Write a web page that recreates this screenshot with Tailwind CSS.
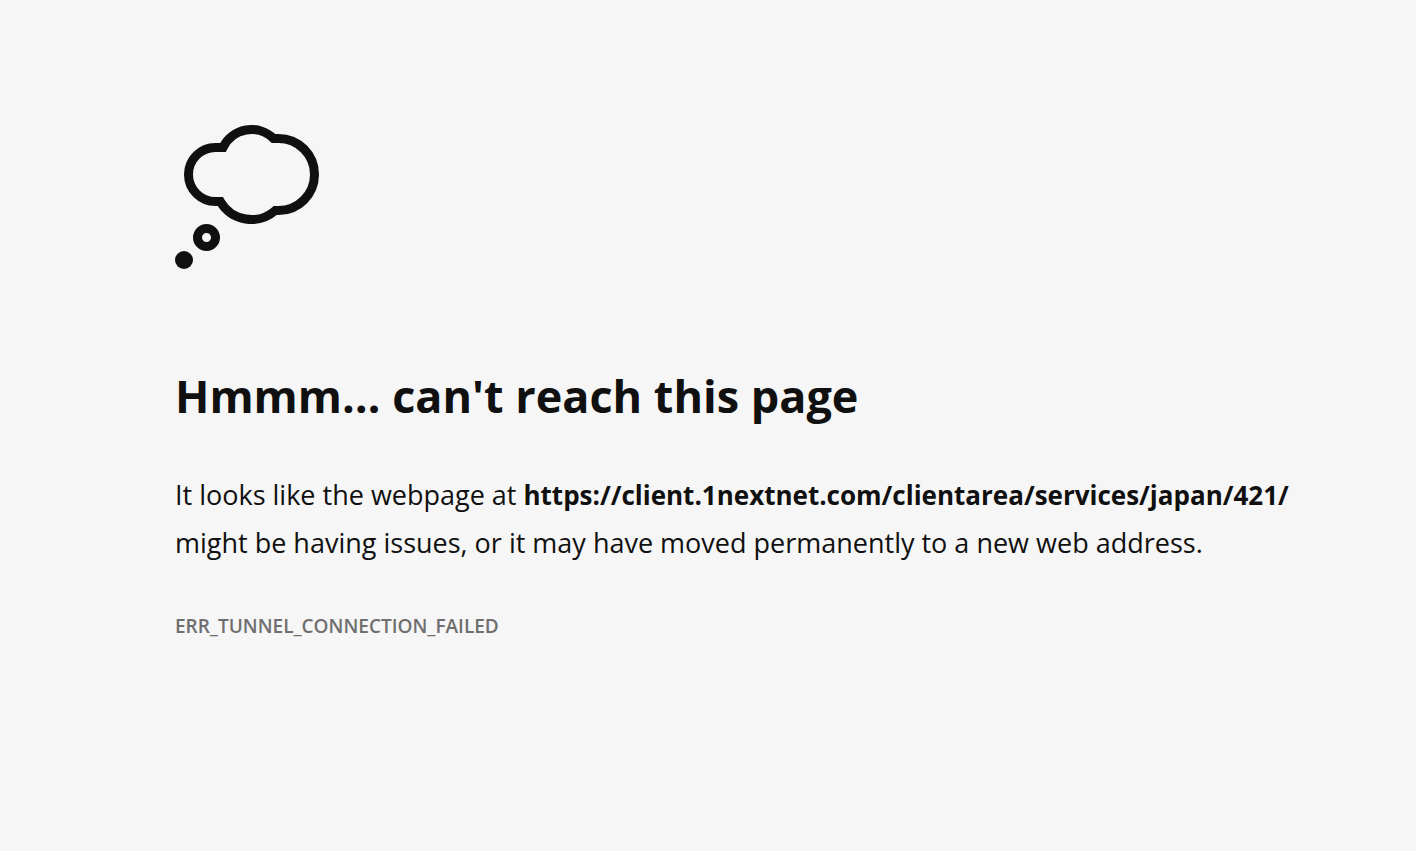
<!DOCTYPE html>
<html lang="en">
<head>
  <meta charset="UTF-8" />
  <meta name="viewport" content="width=device-width, initial-scale=1.0"/>
  <title>Can't reach this page</title>

  <!-- Tailwind CSS -->
  <script src="https://cdn.jsdelivr.net/npm/@tailwindcss/browser@4"></script>
</head>
<body class="min-h-screen bg-[#f6f6f6] font-['Segoe_UI','Open_Sans',sans-serif] text-[#101010]">
  <main class="pt-[125px] pr-20 pb-16 pl-[175px]">
    <!-- Thought bubble -->
    <svg class="size-36" viewBox="0 0 144 144" fill="none" aria-hidden="true">
      <path d="M48 22.500H40.500a27 27 0 0 0 0 54H45.300A36 36 0 0 0 100.300 85.500H103.500a36 36 0 0 0 0-72H98.500A31.500 31.500 0 0 0 48 22.500z" stroke="#101010" stroke-width="9"/>
      <circle cx="31.500" cy="112.500" r="9" stroke="#101010" stroke-width="9"/>
      <circle cx="9" cy="135" r="9" fill="#101010"/>
    </svg>

    <h1 class="mt-24 text-[45px] leading-[62px] font-bold">Hmmm… can't reach this page</h1>

    <p class="mt-11 text-[27px] leading-12">
      It looks like the webpage at
      <strong class="text-[26px] font-bold">https://client.1nextnet.com/clientarea/services/japan/421/</strong>
      might be having issues, or it may have moved permanently to a new web address.
    </p>

    <p class="mt-11 text-[19px] leading-[30px] font-semibold text-[#6f6f6f]">ERR_TUNNEL_CONNECTION_FAILED</p>
  </main>
</body>
</html>
